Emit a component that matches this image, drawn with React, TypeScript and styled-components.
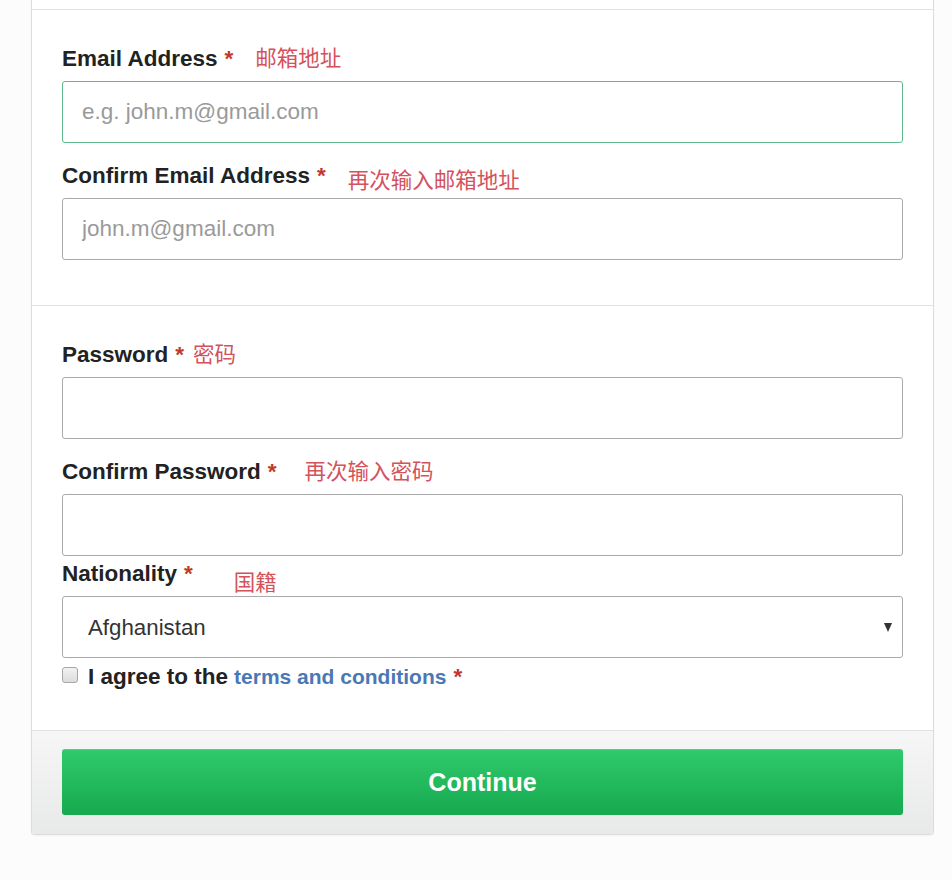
import React from "react";
import styled, { createGlobalStyle } from "styled-components";

const GlobalStyle = createGlobalStyle`
  html, body { margin: 0; padding: 0; background: #fcfcfc; }
  body { font-family: "Liberation Sans", Arial, sans-serif; }
  * { box-sizing: border-box; }
`;

const Page = styled.div`
  padding: 0 18px 40px 31px;
  width: 952px;
`;

const Card = styled.div`
  width: 903px;
  background: #fff;
  border: 1px solid #dcdcdc;
  border-top: none;
  border-radius: 0 0 4px 4px;
  box-shadow: 0 1px 2px rgba(0, 0, 0, 0.04);
`;

const Stub = styled.div`
  height: 10px;
  border-bottom: 1px solid #e2e2e2;
`;

const Section = styled.div<{ $top: number; $bottom: number }>`
  padding: ${(p) => p.$top}px 30px ${(p) => p.$bottom}px 30px;
  border-bottom: 1px solid #e2e2e2;
  display: flex;
  flex-direction: column;
`;

const Field = styled.div<{ $gap: number }>`
  margin-top: ${(p) => p.$gap}px;
  display: flex;
  flex-direction: column;
  gap: 11px;
`;

const Label = styled.label`
  font-size: 22.5px;
  font-weight: bold;
  color: #222;
  line-height: 26px;
  height: 26px;
  white-space: nowrap;
`;

const Star = styled.span`
  color: #c0392b;
  font-weight: bold;
  margin-left: 7px;
`;

const Note = styled.span<{ $left: number; $down?: number }>`
  font-family: "Noto Sans CJK SC", "Noto Sans", sans-serif;
  font-weight: normal;
  font-size: 21.5px;
  color: #d4525b;
  margin-left: ${(p) => p.$left}px;
  position: relative;
  top: ${(p) => p.$down ?? 0}px;
`;

const Input = styled.input<{ $focus?: boolean }>`
  display: block;
  width: 100%;
  height: 62px;
  border: 1px solid ${(p) => (p.$focus ? "#5fb98e" : "#a9a9a9")};
  border-radius: 3px;
  padding: 0 19px;
  font-family: "Liberation Sans", Arial, sans-serif;
  font-size: 22.5px;
  color: #333;
  background: #fff;
  outline: none;
  &::placeholder { color: #9a9a9a; }
`;

const SelectWrap = styled.div`
  position: relative;
`;

const Select = styled.select`
  display: block;
  width: 100%;
  height: 62px;
  appearance: none;
  -webkit-appearance: none;
  border: 1px solid #a9a9a9;
  border-radius: 3px;
  padding: 0 25px;
  font-family: "Liberation Sans", Arial, sans-serif;
  font-size: 22.3px;
  color: #333;
  background: #fff;
  outline: none;
`;

const Arrow = styled.span`
  position: absolute;
  right: 11px;
  top: 50%;
  transform: translateY(-45%);
  width: 0;
  height: 0;
  border-left: 4.5px solid transparent;
  border-right: 4.5px solid transparent;
  border-top: 9px solid #333;
  pointer-events: none;
`;

const AgreeRow = styled.div`
  margin-top: 6px;
  display: flex;
  align-items: center;
  height: 26px;
  white-space: nowrap;
  font-size: 22.5px;
  font-weight: bold;
`;

const Check = styled.input`
  appearance: none;
  -webkit-appearance: none;
  width: 16px;
  height: 16px;
  margin: -4px 10px 0 0;
  border: 1px solid #a6a6a6;
  border-radius: 3px;
  background: linear-gradient(#f2f2f2, #dcdcdc);
`;

const AgreeText = styled.span`
  color: #222;
`;

const TermsLink = styled.a`
  font-size: 21px;
  color: #4a78b4;
  text-decoration: none;
  margin-left: 6px;
`;

const Footer = styled.div`
  padding: 18px 30px 19px 30px;
  background: linear-gradient(#f6f6f6, #e8e9e9);
  border-radius: 0 0 4px 4px;
`;

const Button = styled.button`
  display: block;
  width: 100%;
  height: 66px;
  border: none;
  border-radius: 3px;
  background: linear-gradient(#2fca6c, #17a94f);
  color: #fff;
  font-family: "Liberation Sans", Arial, sans-serif;
  font-size: 25px;
  font-weight: bold;
  box-shadow: inset 0 1px 0 rgba(255, 255, 255, 0.15);
`;

export default function App() {
  return (
    <>
      <GlobalStyle />
      <Page>
        <Card>
          <Stub />
          <Section $top={34} $bottom={45}>
            <Field $gap={0}>
              <Label>
                Email Address<Star>*</Star>
                <Note $left={22}>邮箱地址</Note>
              </Label>
              <Input $focus placeholder="e.g. john.m@gmail.com" />
            </Field>
            <Field $gap={18}>
              <Label>
                Confirm Email Address<Star>*</Star>
                <Note $left={22} $down={5}>再次输入邮箱地址</Note>
              </Label>
              <Input placeholder="john.m@gmail.com" />
            </Field>
          </Section>
          <Section $top={34} $bottom={40}>
            <Field $gap={0}>
              <Label>
                Password<Star>*</Star>
                <Note $left={9}>密码</Note>
              </Label>
              <Input type="password" />
            </Field>
            <Field $gap={18}>
              <Label>
                Confirm Password<Star>*</Star>
                <Note $left={28}>再次输入密码</Note>
              </Label>
              <Input type="password" />
            </Field>
            <Field $gap={3}>
              <Label>
                Nationality<Star>*</Star>
                <Note $left={41} $down={9}>国籍</Note>
              </Label>
              <SelectWrap>
                <Select defaultValue="Afghanistan">
                  <option>Afghanistan</option>
                </Select>
                <Arrow />
              </SelectWrap>
            </Field>
            <AgreeRow>
              <Check type="checkbox" />
              <AgreeText>I agree to the</AgreeText>
              <TermsLink href="#">terms and conditions</TermsLink>
              <Star>*</Star>
            </AgreeRow>
          </Section>
          <Footer>
            <Button>Continue</Button>
          </Footer>
        </Card>
      </Page>
    </>
  );
}
